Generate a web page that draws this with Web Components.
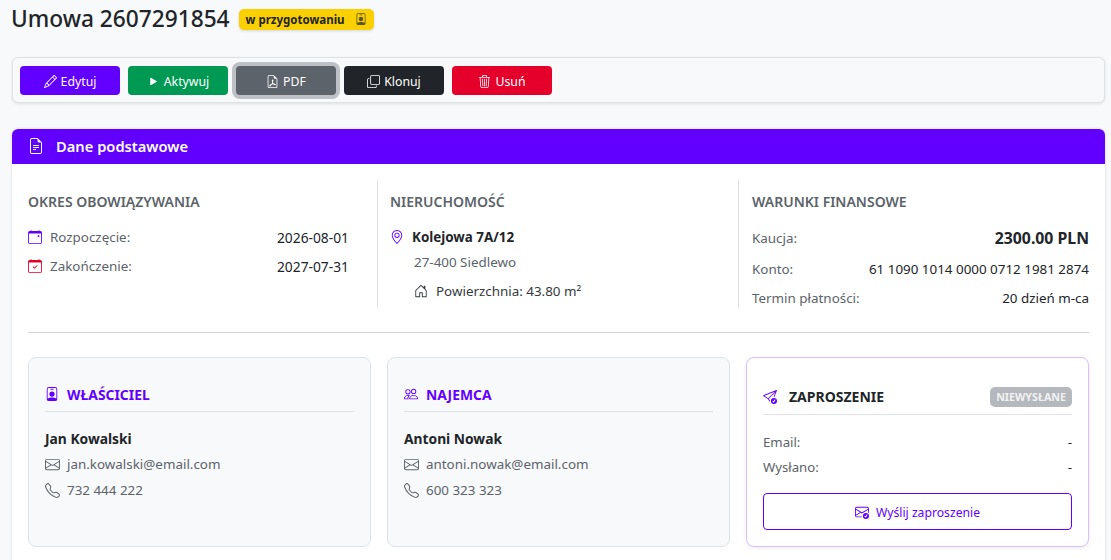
<!DOCTYPE html>
<html lang="pl">
<head>
<meta charset="utf-8">
<title>Umowa 2607291854</title>
<style>
    html, body { margin: 0; height: 560px; overflow: hidden; background: #f8f9fa; }
    body { font-family: 'Noto Sans', sans-serif; font-size: 14px; color: #212529; }
</style>
</head>
<body>
<contract-page></contract-page>

<script>
const ICONS = {
    pencil: 'M12.146.146a.5.5 0 0 1 .708 0l3 3a.5.5 0 0 1 0 .708l-10 10a.5.5 0 0 1-.168.11l-5 2a.5.5 0 0 1-.65-.65l2-5a.5.5 0 0 1 .11-.168zM11.207 2.5 13.5 4.793 14.793 3.5 12.5 1.207zm1.586 3L10.5 3.207 4 9.707V10h.5a.5.5 0 0 1 .5.5v.5h.5a.5.5 0 0 1 .5.5v.5h.293zm-9.761 5.175-.106.106-1.528 3.821 3.821-1.528.106-.106A.5.5 0 0 1 5 12.5V12h-.5a.5.5 0 0 1-.5-.5V11h-.5a.5.5 0 0 1-.468-.325',
    play: 'm11.596 8.697-6.363 3.692c-.54.313-1.233-.066-1.233-.697V4.308c0-.63.692-1.01 1.233-.696l6.363 3.692a.802.802 0 0 1 0 1.393',
    pdf: 'M14 14V4.5L9.5 0H4a2 2 0 0 0-2 2v12a2 2 0 0 0 2 2h8a2 2 0 0 0 2-2M9.5 3A1.5 1.5 0 0 0 11 4.5h2V14a1 1 0 0 1-1 1H4a1 1 0 0 1-1-1V2a1 1 0 0 1 1-1h5.5z M4.603 14.087a.8.8 0 0 1-.438-.42c-.195-.388-.13-.776.08-1.102.198-.307.526-.568.897-.787a7.7 7.7 0 0 1 1.482-.645 20 20 0 0 0 1.062-2.227 7.3 7.3 0 0 1-.43-1.295c-.086-.4-.119-.796-.046-1.136.075-.354.274-.672.65-.823.192-.077.4-.12.602-.077a.7.7 0 0 1 .477.365c.088.164.12.356.127.538.007.188-.012.396-.047.614-.084.51-.27 1.134-.52 1.794a11 11 0 0 0 .98 1.686 5.8 5.8 0 0 1 1.334.05c.364.066.734.195.96.465.12.144.193.32.2.518.007.192-.047.382-.138.563a1.04 1.04 0 0 1-.354.416.86.86 0 0 1-.51.138c-.331-.014-.654-.196-.933-.417a5.7 5.7 0 0 1-.911-.95 11.7 11.7 0 0 0-1.997.406 11.3 11.3 0 0 1-1.02 1.51c-.292.35-.609.656-.927.787a.8.8 0 0 1-.58.029',
    copy: 'M4 2a2 2 0 0 1 2-2h8a2 2 0 0 1 2 2v8a2 2 0 0 1-2 2H6a2 2 0 0 1-2-2zm2-1a1 1 0 0 0-1 1v8a1 1 0 0 0 1 1h8a1 1 0 0 0 1-1V2a1 1 0 0 0-1-1zM2 5a1 1 0 0 0-1 1v8a1 1 0 0 0 1 1h8a1 1 0 0 0 1-1v-1h1v1a2 2 0 0 1-2 2H2a2 2 0 0 1-2-2V6a2 2 0 0 1 2-2h1v1z',
    trash: 'M6.5 1h3a.5.5 0 0 1 .5.5v1H6v-1a.5.5 0 0 1 .5-.5M11 2.5v-1A1.5 1.5 0 0 0 9.5 0h-3A1.5 1.5 0 0 0 5 1.5v1H1.5a.5.5 0 0 0 0 1h.538l.853 10.66A2 2 0 0 0 4.885 16h6.23a2 2 0 0 0 1.994-1.84l.853-10.66h.538a.5.5 0 0 0 0-1zm1.958 1-.846 10.58a1 1 0 0 1-.997.92h-6.23a1 1 0 0 1-.997-.92L3.042 3.5zm-7.487 1a.5.5 0 0 1 .528.47l.5 8.5a.5.5 0 0 1-.998.06L5 5.03a.5.5 0 0 1 .47-.53Zm5.058 0a.5.5 0 0 1 .47.53l-.5 8.5a.5.5 0 1 1-.998-.06l.5-8.5a.5.5 0 0 1 .528-.47M8 4.5a.5.5 0 0 1 .5.5v8.5a.5.5 0 0 1-1 0V5a.5.5 0 0 1 .5-.5',
    badge: 'M6.5 2a.5.5 0 0 0 0 1h3a.5.5 0 0 0 0-1zM11 8a3 3 0 1 1-6 0 3 3 0 0 1 6 0 M4.5 0A2.5 2.5 0 0 0 2 2.5V14a2 2 0 0 0 2 2h8a2 2 0 0 0 2-2V2.5A2.5 2.5 0 0 0 11.5 0zM3 2.5A1.5 1.5 0 0 1 4.5 1h7A1.5 1.5 0 0 1 13 2.5v10.795a4.2 4.2 0 0 0-.776-.492C11.392 12.387 10.063 12 8 12s-3.392.387-4.224.803a4.2 4.2 0 0 0-.776.492z',
    file: 'M5.5 7a.5.5 0 0 0 0 1h5a.5.5 0 0 0 0-1zM5 9.5a.5.5 0 0 1 .5-.5h5a.5.5 0 0 1 0 1h-5a.5.5 0 0 1-.5-.5m0 2a.5.5 0 0 1 .5-.5h2a.5.5 0 0 1 0 1h-2a.5.5 0 0 1-.5-.5 M9.5 0H4a2 2 0 0 0-2 2v12a2 2 0 0 0 2 2h8a2 2 0 0 0 2-2V4.5zm0 1v2A1.5 1.5 0 0 0 11 4.5h2V14a1 1 0 0 1-1 1H4a1 1 0 0 1-1-1V2a1 1 0 0 1 1-1z',
    calendar: 'M11 6.5a.5.5 0 0 1 .5-.5h1a.5.5 0 0 1 .5.5v1a.5.5 0 0 1-.5.5h-1a.5.5 0 0 1-.5-.5z M3.5 0a.5.5 0 0 1 .5.5V1h8V.5a.5.5 0 0 1 1 0V1h1a2 2 0 0 1 2 2v11a2 2 0 0 1-2 2H2a2 2 0 0 1-2-2V3a2 2 0 0 1 2-2h1V.5a.5.5 0 0 1 .5-.5M1 4v10a1 1 0 0 0 1 1h12a1 1 0 0 0 1-1V4z',
    calendarCheck: 'M10.854 7.146a.5.5 0 0 1 0 .708l-3 3a.5.5 0 0 1-.708 0l-1.5-1.5a.5.5 0 1 1 .708-.708L7.5 9.793l2.646-2.647a.5.5 0 0 1 .708 0 M3.5 0a.5.5 0 0 1 .5.5V1h8V.5a.5.5 0 0 1 1 0V1h1a2 2 0 0 1 2 2v11a2 2 0 0 1-2 2H2a2 2 0 0 1-2-2V3a2 2 0 0 1 2-2h1V.5a.5.5 0 0 1 .5-.5M1 4v10a1 1 0 0 0 1 1h12a1 1 0 0 0 1-1V4z',
    geo: 'M12.166 8.94c-.524 1.062-1.234 2.12-1.96 3.07A32 32 0 0 1 8 14.58a32 32 0 0 1-2.206-2.57c-.726-.95-1.436-2.008-1.96-3.07C3.304 7.867 3 6.862 3 6a5 5 0 0 1 10 0c0 .862-.305 1.867-.834 2.94M8 16s6-5.686 6-10A6 6 0 0 0 2 6c0 4.314 6 10 6 10 M8 8a2 2 0 1 1 0-4 2 2 0 0 1 0 4m0 1a3 3 0 1 0 0-6 3 3 0 0 0 0 6',
    house: 'M8.354 1.146a.5.5 0 0 0-.708 0l-6 6A.5.5 0 0 0 1.5 7.5v7a.5.5 0 0 0 .5.5h4.5a.5.5 0 0 0 .5-.5v-4h2v4a.5.5 0 0 0 .5.5H14a.5.5 0 0 0 .5-.5v-7a.5.5 0 0 0-.146-.354L13 5.793V2.5a.5.5 0 0 0-.5-.5h-1a.5.5 0 0 0-.5.5v1.293zM2.5 14V7.707l5.5-5.5 5.5 5.5V14H10v-4a.5.5 0 0 0-.5-.5h-3a.5.5 0 0 0-.5.5v4z',
    people: 'M15 14s1 0 1-1-1-4-5-4-5 3-5 4 1 1 1 1zm-7.978-1L7 12.996c.001-.264.167-1.03.76-1.72C8.312 10.629 9.282 10 11 10c1.717 0 2.687.63 3.24 1.276.593.69.758 1.457.76 1.72l-.008.002-.014.002zM11 7a2 2 0 1 0 0-4 2 2 0 0 0 0 4m3-2a3 3 0 1 1-6 0 3 3 0 0 1 6 0M6.936 9.28a6 6 0 0 0-1.23-.247A7 7 0 0 0 5 9c-4 0-5 3-5 4q0 1 1 1h4.216A2.24 2.24 0 0 1 5 13c0-1.01.377-2.042 1.09-2.904.243-.294.526-.569.846-.816M4.92 10A5.5 5.5 0 0 0 4 13H1c0-.26.164-1.03.76-1.724.545-.636 1.492-1.256 3.16-1.275ZM1.5 5.5a3 3 0 1 1 6 0 3 3 0 0 1-6 0m3-2a2 2 0 1 0 0 4 2 2 0 0 0 0-4',
    envelope: 'M0 4a2 2 0 0 1 2-2h12a2 2 0 0 1 2 2v8a2 2 0 0 1-2 2H2a2 2 0 0 1-2-2zm2-1a1 1 0 0 0-1 1v.217l7 4.2 7-4.2V4a1 1 0 0 0-1-1zm13 2.383-4.708 2.825L15 11.105zm-.034 6.876-5.64-3.471L8 9.583l-1.326-.795-5.64 3.47A1 1 0 0 0 2 13h12a1 1 0 0 0 .966-.741M1 11.105l4.708-2.897L1 5.383z',
    phone: 'M3.654 1.328a.678.678 0 0 0-1.015-.063L1.605 2.3c-.483.484-.661 1.169-.45 1.77a17.6 17.6 0 0 0 4.168 6.608 17.6 17.6 0 0 0 6.608 4.168c.601.211 1.286.033 1.77-.45l1.034-1.034a.678.678 0 0 0-.063-1.015l-2.307-1.794a.68.68 0 0 0-.58-.122l-2.19.547a1.75 1.75 0 0 1-1.657-.459L5.482 8.062a1.75 1.75 0 0 1-.46-1.657l.548-2.19a.68.68 0 0 0-.122-.58zM1.884.511a1.745 1.745 0 0 1 2.612.163L6.29 2.98c.329.423.445.974.315 1.494l-.547 2.19a.68.68 0 0 0 .178.643l2.457 2.457a.68.68 0 0 0 .644.178l2.189-.547a1.75 1.75 0 0 1 1.494.315l2.306 1.794c.829.645.905 1.87.163 2.611l-1.034 1.034c-.74.74-1.846 1.065-2.877.702a18.6 18.6 0 0 1-7.01-4.42 18.6 18.6 0 0 1-4.42-7.009c-.362-1.03-.037-2.137.703-2.877z',
    send: 'M15.964.686a.5.5 0 0 0-.65-.65L.767 5.855a.75.75 0 0 0-.124 1.329l4.995 3.178 1.531 2.406a.5.5 0 0 0 .844-.536L6.637 10.07l7.494-7.494-1.895 4.738a.5.5 0 1 0 .928.372zm-2.54 1.183L5.93 9.363 1.591 6.602z M16 12.5a3.5 3.5 0 1 1-7 0 3.5 3.5 0 0 1 7 0m-1.993-1.679a.5.5 0 0 0-.686.172l-1.17 1.95-.547-.547a.5.5 0 0 0-.708.708l.774.773a.75.75 0 0 0 1.174-.144l1.335-2.226a.5.5 0 0 0-.172-.686',
    envelopeCheck: 'M2 2a2 2 0 0 0-2 2v8.01A2 2 0 0 0 2 14h5.5a.5.5 0 0 0 0-1H2a1 1 0 0 1-.966-.741l5.64-3.471L8 9.583l7-4.2V8.5a.5.5 0 0 0 1 0V4a2 2 0 0 0-2-2zm3.708 6.208L1 11.105V5.383zM1 4.217V4a1 1 0 0 1 1-1h12a1 1 0 0 1 1 1v.217l-7 4.2z M16 12.5a3.5 3.5 0 1 1-7 0 3.5 3.5 0 0 1 7 0m-1.993-1.679a.5.5 0 0 0-.686.172l-1.17 1.95-.547-.547a.5.5 0 0 0-.708.708l.774.773a.75.75 0 0 0 1.174-.144l1.335-2.226a.5.5 0 0 0-.172-.686'
};

class BiIcon extends HTMLElement {
    connectedCallback() {
        const size = this.getAttribute('size') || '14';
        const d = ICONS[this.getAttribute('name')] || '';
        this.attachShadow({ mode: 'open' });
        this.shadowRoot.innerHTML = `
            <style>
                :host { display: inline-flex; flex: none; width: ${size}px; height: ${size}px; }
                svg { display: block; width: 100%; height: 100%; fill: currentColor; }
            </style>
            <svg viewBox="0 0 16 16"><path fill-rule="evenodd" d="${d}"></path></svg>
        `;
    }
}

class StatusBadge extends HTMLElement {
    constructor() {
        super();
        this.attachShadow({ mode: 'open' });
        this.shadowRoot.innerHTML = `
            <style>
                :host {
                    display: inline-flex;
                    align-items: center;
                    gap: 10px;
                    height: 21px;
                    padding: 0 7px;
                    background: #fbd000;
                    color: #212529;
                    border-radius: 5px;
                    font-size: 11.5px;
                    font-weight: 700;
                    box-shadow: 0 1px 3px rgba(0, 0, 0, .15);
                }
                bi-icon { color: #5c5326; }
            </style>
            <slot></slot><bi-icon name="badge" size="12"></bi-icon>
        `;
    }
}

class ActionButton extends HTMLElement {
    constructor() {
        super();
        this.attachShadow({ mode: 'open' });
    }

    connectedCallback() {
        const bg = this.getAttribute('bg');
        const focus = this.hasAttribute('focused');
        this.shadowRoot.innerHTML = `
            <style>
                :host {
                    display: inline-flex;
                    align-items: center;
                    justify-content: center;
                    gap: 4px;
                    width: 100px;
                    height: 29px;
                    padding-top: 1px;
                    box-sizing: border-box;
                    background: ${bg};
                    color: #fff;
                    border-radius: 4px;
                    font-size: 12.3px;
                    ${focus ? 'box-shadow: 0 0 0 4px rgba(130, 138, 145, .5);' : ''}
                }
            </style>
            <bi-icon name="${this.getAttribute('icon')}" size="13"></bi-icon>
            <slot></slot>
        `;
    }
}

class InfoRow extends HTMLElement {
    constructor() {
        super();
        this.attachShadow({ mode: 'open' });
        this.shadowRoot.innerHTML = `
            <style>
                :host {
                    display: flex;
                    justify-content: space-between;
                    align-items: center;
                    color: #5c636a;
                    font-size: 13.4px;
                }
                .label { display: flex; align-items: center; gap: 8px; }
                .value { color: #212529; }
            </style>
            <span class="label"><slot name="icon"></slot><slot name="label"></slot></span>
            <span class="value"><slot></slot></span>
        `;
    }
}

class PartyCard extends HTMLElement {
    constructor() {
        super();
        this.attachShadow({ mode: 'open' });
    }

    connectedCallback() {
        this.shadowRoot.innerHTML = `
            <style>
                :host {
                    display: block;
                    box-sizing: border-box;
                    height: 190px;
                    padding: 25px 16px 16px;
                    background: #f8f9fa;
                    border: 1px solid #dee2e6;
                    border-radius: 8px;
                    font-size: 13.4px;
                }
                .title {
                    display: flex;
                    align-items: center;
                    gap: 8px;
                    height: 22px;
                    padding-bottom: 6px;
                    border-bottom: 1px solid #dee2e6;
                    color: #6200ff;
                    font-size: 13.9px;
                    font-weight: 700;
                }
                .name { margin-top: 17px; font-size: 13.8px; font-weight: 700; color: #212529; line-height: 20px; }
                .line {
                    display: flex;
                    align-items: center;
                    gap: 7px;
                    margin-top: 5px;
                    line-height: 20px;
                    color: #5c636a;
                }
                .line + .line { margin-top: 6px; }
            </style>
            <div class="title"><bi-icon name="${this.getAttribute('icon')}" size="14"></bi-icon>${this.getAttribute('title')}</div>
            <div class="name">${this.getAttribute('name')}</div>
            <div class="line"><bi-icon name="envelope" size="15"></bi-icon>${this.getAttribute('email')}</div>
            <div class="line"><bi-icon name="phone" size="15"></bi-icon>${this.getAttribute('phone')}</div>
        `;
    }
}

class InviteCard extends HTMLElement {
    constructor() {
        super();
        this.attachShadow({ mode: 'open' });
        this.shadowRoot.innerHTML = `
            <style>
                :host {
                    display: block;
                    box-sizing: border-box;
                    height: 190px;
                    padding: 28px 16px 0;
                    background: #fff;
                    border: 1px solid #d9bfff;
                    border-radius: 8px;
                    box-shadow: 0 1px 4px rgba(0, 0, 0, .08);
                    font-size: 13px;
                }
                .head {
                    display: flex;
                    align-items: center;
                    height: 21px;
                    padding-bottom: 7px;
                    border-bottom: 1px solid #dee2e6;
                }
                .head bi-icon { color: #6200ff; }
                .title { margin-left: 12px; font-size: 14px; font-weight: 700; color: #212529; }
                .pill {
                    margin-left: auto;
                    padding: 0 6px;
                    height: 20px;
                    line-height: 20px;
                    background: #b5b8bd;
                    color: #f1f2f3;
                    border-radius: 5px;
                    font-size: 10.7px;
                    font-weight: 700;
                }
                info-row { margin-top: 5px; line-height: 20px; font-size: 13.2px; }
                info-row.first { margin-top: 17px; }
                .send {
                    display: flex;
                    align-items: center;
                    justify-content: center;
                    gap: 7px;
                    height: 37px;
                    margin-top: 16px;
                    padding-top: 1px;
                    box-sizing: border-box;
                    border: 1px solid #6200ff;
                    border-radius: 4px;
                    color: #6200ff;
                    font-size: 12.2px;
                }
            </style>
            <div class="head">
                <bi-icon name="send" size="14"></bi-icon>
                <span class="title">ZAPROSZENIE</span>
                <span class="pill">NIEWYSŁANE</span>
            </div>
            <info-row class="first"><span slot="label">Email:</span>-</info-row>
            <info-row><span slot="label">Wysłano:</span>-</info-row>
            <div class="send"><bi-icon name="envelopeCheck" size="14"></bi-icon>Wyślij zaproszenie</div>
        `;
    }
}

class ContractPage extends HTMLElement {
    constructor() {
        super();
        this.attachShadow({ mode: 'open' });
        this.shadowRoot.innerHTML = `
            <style>
                :host {
                    display: block;
                    padding: 0 6px 0 12px;
                }
                .title-row {
                    display: flex;
                    align-items: center;
                    gap: 9px;
                    height: 38px;
                    margin-left: -1px;
                }
                h1 { margin: 0; font-size: 22.7px; font-weight: 500; color: #212529; line-height: 38px; }
                .toolbar {
                    display: flex;
                    gap: 8px;
                    margin-top: 19px;
                    padding: 8px 7px;
                    height: 46px;
                    box-sizing: border-box;
                    background: #f8f9fa;
                    border: 1px solid #dee2e6;
                    border-radius: 6px;
                    box-shadow: 0 1px 3px rgba(0, 0, 0, .1);
                }
                .card {
                    margin-top: 26px;
                    background: #fff;
                    border-radius: 6px 6px 0 0;
                    box-shadow: 0 0 3px rgba(0, 0, 0, .15);
                    overflow: hidden;
                }
                .card-head {
                    display: flex;
                    align-items: center;
                    gap: 12px;
                    height: 35px;
                    box-sizing: border-box;
                    padding: 0 0 1px 16px;
                    background: #6200ff;
                    color: #fff;
                    font-size: 14.7px;
                    font-weight: 600;
                }
                .card-body { padding: 16px 16px 16px; }
                .columns {
                    display: grid;
                    grid-template-columns: 349px 361px 1fr;
                    height: 128px;
                }
                .col { padding-top: 13px; box-sizing: border-box; }
                .col + .col { border-left: 1px solid #dee2e6; padding-left: 12px; }
                .col.first { padding-right: 28px; }
                .col.last { padding-left: 13px; }
                h6 {
                    margin: 0 0 16px;
                    font-size: 14px;
                    font-weight: 600;
                    line-height: 18px;
                    color: #5c636a;
                }
                info-row { height: 20px; margin-bottom: 9px; }
                info-row.tall { height: 22px; margin-bottom: 10px; }
                info-row:last-child { margin-bottom: 0; }
                .date { font-size: 13.8px; }
                .cal { color: #6200ff; }
                .cal.end { color: #e4002b; }
                .street {
                    display: flex;
                    align-items: center;
                    gap: 8px;
                    font-size: 13.4px;
                    font-weight: 700;
                    line-height: 20px;
                }
                .street bi-icon { color: #6200ff; }
                .city { margin: 5px 0 0 24px; font-size: 13.4px; line-height: 20px; color: #5c636a; }
                .area {
                    display: flex;
                    align-items: center;
                    gap: 8px;
                    margin: 9px 0 0 24px;
                    font-size: 13.4px;
                    line-height: 20px;
                    color: #343a40;
                }
                .strong { font-size: 15.8px; font-weight: 700; color: #212529; }
                hr { margin: 24px 0; border: 0; border-top: 1px solid #d3d6d9; }
                .parties { display: grid; grid-template-columns: repeat(3, 1fr); gap: 16px; }
            </style>
            <div class="title-row">
                <h1>Umowa 2607291854</h1>
                <status-badge>w przygotowaniu</status-badge>
            </div>
            <div class="toolbar">
                <action-button bg="#6200ff" icon="pencil">Edytuj</action-button>
                <action-button bg="#009954" icon="play">Aktywuj</action-button>
                <action-button bg="#5c636a" icon="pdf" focused>PDF</action-button>
                <action-button bg="#212529" icon="copy">Klonuj</action-button>
                <action-button bg="#e4002b" icon="trash">Usuń</action-button>
            </div>
            <section class="card">
                <div class="card-head"><bi-icon name="file" size="16"></bi-icon>Dane podstawowe</div>
                <div class="card-body">
                    <div class="columns">
                        <div class="col first">
                            <h6>OKRES OBOWIĄZYWANIA</h6>
                            <info-row>
                                <bi-icon slot="icon" class="cal" name="calendar" size="14"></bi-icon>
                                <span slot="label">Rozpoczęcie:</span><span class="date">2026-08-01</span>
                            </info-row>
                            <info-row>
                                <bi-icon slot="icon" class="cal end" name="calendarCheck" size="14"></bi-icon>
                                <span slot="label">Zakończenie:</span><span class="date">2027-07-31</span>
                            </info-row>
                        </div>
                        <div class="col">
                            <h6>NIERUCHOMOŚĆ</h6>
                            <div class="street"><bi-icon name="geo" size="14"></bi-icon>Kolejowa 7A/12</div>
                            <div class="city">27-400 Siedlewo</div>
                            <div class="area"><bi-icon name="house" size="14"></bi-icon>Powierzchnia: 43.80 m²</div>
                        </div>
                        <div class="col last">
                            <h6>WARUNKI FINANSOWE</h6>
                            <info-row class="tall"><span slot="label">Kaucja:</span><span class="strong">2300.00 PLN</span></info-row>
                            <info-row>
                                <span slot="label">Konto:</span>61 1090 1014 0000 0712 1981 2874
                            </info-row>
                            <info-row><span slot="label">Termin płatności:</span>20 dzień m-ca</info-row>
                        </div>
                    </div>
                    <hr>
                    <div class="parties">
                        <party-card icon="badge" title="WŁAŚCICIEL" name="Jan Kowalski" email="jan.kowalski@email.com" phone="732 444 222"></party-card>
                        <party-card icon="people" title="NAJEMCA" name="Antoni Nowak" email="antoni.nowak@email.com" phone="600 323 323"></party-card>
                        <invite-card></invite-card>
                    </div>
                </div>
            </section>
        `;
    }
}

customElements.define('bi-icon', BiIcon);
customElements.define('status-badge', StatusBadge);
customElements.define('action-button', ActionButton);
customElements.define('info-row', InfoRow);
customElements.define('party-card', PartyCard);
customElements.define('invite-card', InviteCard);
customElements.define('contract-page', ContractPage);
</script>
</body>
</html>
